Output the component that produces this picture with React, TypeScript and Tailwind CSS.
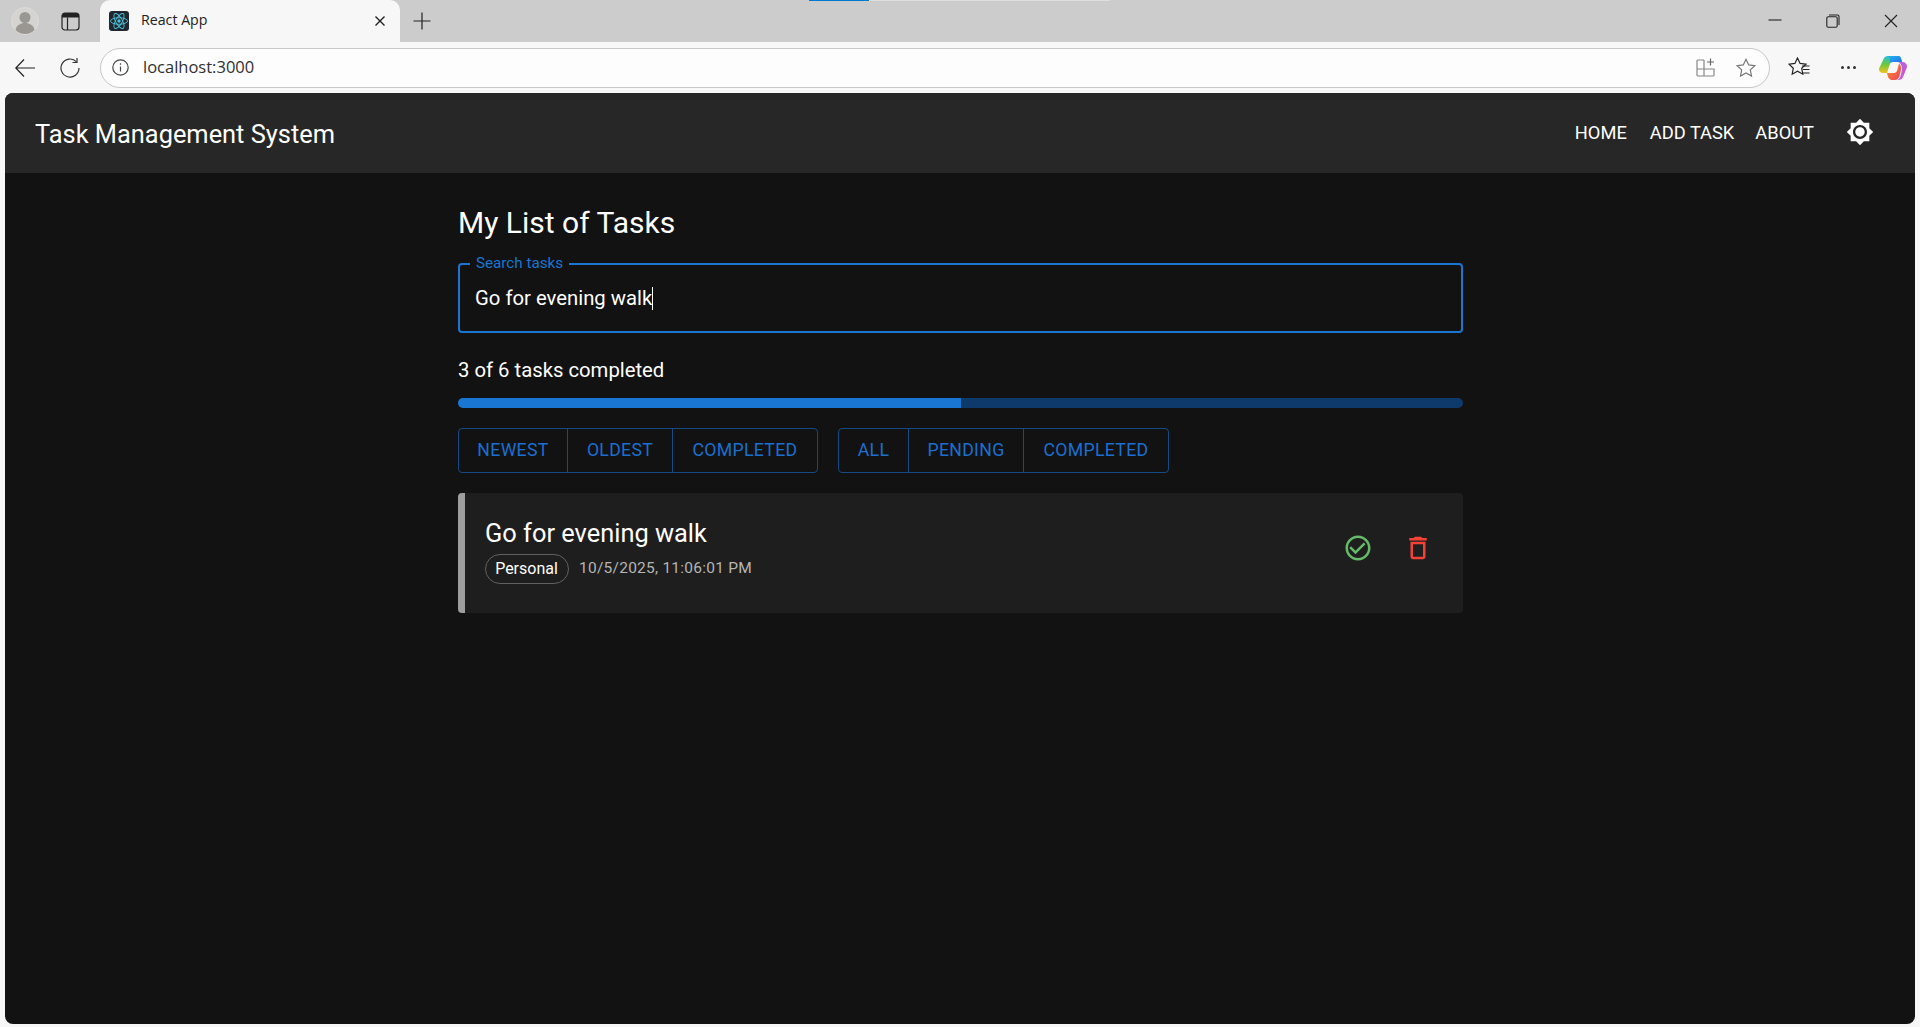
import React from "react";

const CHECK = "M16.59 7.58 10 14.17l-3.59-3.58L5 12l5 5 8-8zM12 2C6.48 2 2 6.48 2 12s4.48 10 10 10 10-4.48 10-10S17.52 2 12 2zm0 18c-4.42 0-8-3.58-8-8s3.58-8 8-8 8 3.58 8 8-3.58 8-8 8z";
const TRASH = "M6 19c0 1.1.9 2 2 2h8c1.1 0 2-.9 2-2V7H6v12zM8 9h8v10H8V9zm7.500-5l-1-1h-5l-1 1H5v2h14V4z";
const SUN = "M20 8.69V4h-4.69L12 .69 8.69 4H4v4.69L.69 12 4 15.31V20h4.69L12 23.31 15.31 20H20v-4.69L23.31 12 20 8.69zM12 18c-3.31 0-6-2.69-6-6s2.69-6 6-6 6 2.69 6 6-2.69 6-6 6zm0-10c-2.21 0-4 1.79-4 4s1.79 4 4 4 4-1.79 4-4-1.79-4-4-4z";

function Group({ items, widths }: { items: string[]; widths: string[] }) {
  return (
    <div className="flex h-[45px] rounded border border-[#144a85]">
      {items.map((t, i) => (
        <div
          key={t}
          className={`flex items-center justify-center text-[17.700px] font-normal tracking-[0.3px] text-[#1a6fd0] ${widths[i]} ${i > 0 ? "border-l border-[#144a85]" : ""}`}
        >
          {t}
        </div>
      ))}
    </div>
  );
}

function TabStrip() {
  return (
    <div className="relative flex h-[42px] shrink-0 items-center bg-[#cccccc]">
      <div className="absolute left-[809px] top-0 h-px w-[60px] bg-[#0078d4]" />
      <div className="absolute left-[869px] top-0 h-px w-[241px] bg-[#dedede]" />
      <div className="ml-[11px] flex h-7 w-7 items-center justify-center">
        <svg width="28" height="28" viewBox="0 0 28 28">
          <circle cx="14" cy="14" r="13.500" fill="#d6d4d1" stroke="#dcdad7" />
          <circle cx="14" cy="10.500" r="5.500" fill="#9a9793" />
          <path d="M4.500 23c1-5 5-7 9.500-7s8.500 2 9.500 7c-2.500 2.700-6 4-9.500 4s-7-1.300-9.500-4z" fill="#9a9793" />
        </svg>
      </div>
      <div className="ml-[21px] flex h-5 w-5 items-center justify-center">
        <svg width="19" height="19" viewBox="0 0 19 19" fill="none">
          <rect x="1" y="1" width="17" height="17" rx="3" stroke="#222" strokeWidth="1.200" />
          <path d="M1 5.500V4a3 3 0 0 1 3-3h11a3 3 0 0 1 3 3v1.500z" fill="#222" />
          <path d="M6.500 5.500V18" stroke="#222" strokeWidth="1.200" />
        </svg>
      </div>
      <div className="ml-5 flex h-[42px] w-[300px] items-center rounded-t-[10px] bg-[#f7f7f7] pl-[9px] pr-[14px]">
        <svg width="20" height="20" viewBox="0 0 20 20">
          <rect width="20" height="20" rx="3" fill="#20272e" />
          <g fill="none" stroke="#4fc3dc" strokeWidth="0.900">
            <ellipse cx="10" cy="10" rx="8.500" ry="3.300" />
            <ellipse cx="10" cy="10" rx="8.500" ry="3.300" transform="rotate(60 10 10)" />
            <ellipse cx="10" cy="10" rx="8.500" ry="3.300" transform="rotate(120 10 10)" />
          </g>
          <circle cx="10" cy="10" r="1.700" fill="#4fc3dc" />
        </svg>
        <span className="ml-3 flex-1 pb-[2px] font-['Open_Sans',sans-serif] text-[14.200px] text-[#222]">React App</span>
        <svg width="12" height="12" viewBox="0 0 12 12" stroke="#1f1f1f" strokeWidth="1.400">
          <path d="M1.500 1.500l9 9M10.500 1.500l-9 9" />
        </svg>
      </div>
      <div className="ml-[13px] flex h-[18px] w-[18px] items-center justify-center">
        <svg width="18" height="18" viewBox="0 0 18 18" stroke="#222" strokeWidth="1.200">
          <path d="M9 0.500v17M0.500 9h17" />
        </svg>
      </div>
      <div className="ml-auto flex items-center pr-[22px]">
        <svg width="14" height="14" viewBox="0 0 14 14" stroke="#222" strokeWidth="1.100" className="mr-[44px]">
          <path d="M0.500 6h13" />
        </svg>
        <svg width="14" height="14" viewBox="0 0 14 14" fill="none" stroke="#222" strokeWidth="1.100" className="mr-[44px]">
          <rect x="0.800" y="2.800" width="10.400" height="10.400" rx="1.500" />
          <path d="M3 1h8.500a1.500 1.500 0 0 1 1.500 1.500V11" />
        </svg>
        <svg width="14" height="14" viewBox="0 0 14 14" stroke="#222" strokeWidth="1.100">
          <path d="M1 1l12 12M13 1L1 13" />
        </svg>
      </div>
    </div>
  );
}

function Toolbar() {
  return (
    <div className="flex h-[51px] shrink-0 items-center bg-[#f7f7f7]">
      <div className="ml-[15px] flex h-5 w-5 items-center justify-center">
        <svg width="20" height="20" viewBox="0 0 20 20" fill="none" stroke="#222" strokeWidth="1.200">
          <path d="M20 10H0.800M9 1.500L0.800 10 9 18.500" />
        </svg>
      </div>
      <div className="ml-[25px] flex h-5 w-5 items-center justify-center">
        <svg width="20" height="20" viewBox="0 0 20 20" fill="none" stroke="#333" strokeWidth="1.200">
          <path d="M16.500 3.800A9 9 0 1 0 19 10" />
          <path d="M17 0v4.500h-4.500" />
        </svg>
      </div>
      <div className="ml-5 flex h-10 w-[1670px] items-center rounded-full border border-[#c8c8c8] bg-[#fdfdfd] pl-[11px] pr-[13px]">
        <svg width="17" height="17" viewBox="0 0 17 17" fill="none" stroke="#444" strokeWidth="1.200">
          <circle cx="8.500" cy="8.500" r="7.700" />
          <path d="M8.500 7.500v5M8.500 4.300v1.500" />
        </svg>
        <span className="ml-[14px] flex-1 font-['Open_Sans',sans-serif] text-[16.500px] text-[#303030]">localhost:3000</span>
        <svg width="19" height="19" viewBox="0 0 19 19" fill="none" stroke="#888" strokeWidth="1.200">
          <path d="M8 2H2a1 1 0 0 0-1 1v14a1 1 0 0 0 1 1h15a1 1 0 0 0 1-1v-6H1M8 2v16" />
          <path d="M14.500 0.500v7M11 4h7" stroke="#666" />
        </svg>
        <svg className="ml-[21px]" width="20" height="20" viewBox="0 0 20 20" fill="none" stroke="#777" strokeWidth="1.200">
          <path d="M10 1.300l2.700 5.600 6.100.8-4.500 4.200 1.200 6.100L10 15l-5.500 3 1.200-6.100-4.500-4.200 6.100-.8z" />
        </svg>
      </div>
      <svg className="ml-[18px]" width="22" height="21" viewBox="0 0 22 21" fill="none" stroke="#222" strokeWidth="1.200">
        <path d="M9.500 1l2.600 5.400 5.900.8-4.300 4.100 1.100 5.900-5.300-2.900-5.300 2.900 1.100-5.900L1 7.200l5.900-.8z" />
        <path d="M14 9h7.500M15 12.500h6.500M15 16h6.500" />
      </svg>
      <div className="ml-[31px] flex items-center gap-[3px]">
        <span className="h-[3px] w-[3px] rounded-full bg-[#333]" />
        <span className="h-[3px] w-[3px] rounded-full bg-[#333]" />
        <span className="h-[3px] w-[3px] rounded-full bg-[#333]" />
      </div>
      <svg className="ml-[23px]" width="28" height="26" viewBox="0 0 28 26">
        <defs>
          <linearGradient id="cpa" x1="0" y1="0" x2="1" y2="1">
            <stop offset="0" stopColor="#1fb6f2" />
            <stop offset="1" stopColor="#2a6be8" />
          </linearGradient>
          <linearGradient id="cpb" x1="0" y1="0" x2="0" y2="1">
            <stop offset="0" stopColor="#22c0d8" />
            <stop offset="0.500" stopColor="#6cc83c" />
            <stop offset="1" stopColor="#f6c31c" />
          </linearGradient>
          <linearGradient id="cpc" x1="0" y1="0" x2="1" y2="1">
            <stop offset="0" stopColor="#a868f0" />
            <stop offset="1" stopColor="#d850c0" />
          </linearGradient>
          <linearGradient id="cpd" x1="0" y1="0" x2="1" y2="1">
            <stop offset="0" stopColor="#f59a2c" />
            <stop offset="1" stopColor="#ee4058" />
          </linearGradient>
        </defs>
        <path d="M9 1h10c1.500 0 2.500.8 3 2.200l1 3.800H14c-2 0-3 1-3.500 3L8 18H4C1.800 18 0 16.500 0 14.500c0-.6.100-1 .3-1.600L4.500 4C5.300 2 7 1 9 1z" fill="url(#cpb)" />
        <path d="M9 1h10c1.500 0 2.500.8 3 2.200l1 3.800h-9c-1 0-2 .2-2.700 1C11 4.500 10.500 2 9 1z" fill="url(#cpa)" />
        <path d="M19 7h4c3 0 5 2 5 4.500 0 .5-.100 1-.3 1.500L24 22c-.8 2-2.500 3-4.500 3h-1c2-1 2.800-3 3.300-5l1.200-5c.5-3-1-7-3.900-8z" fill="url(#cpc)" />
        <path d="M8 18h7c1.500 0 2.800-1 3.300-3L20 8.500c1.500 1 2.500 3.500 2 6.500l-1.200 5c-.5 2-1.800 5-4.800 5h-3c-2.500 0-4-2-5-7z" fill="url(#cpd)" />
      </svg>
    </div>
  );
}

export default function App() {
  return (
    <div className="flex h-[1027px] w-full flex-col overflow-hidden bg-[#f7f7f7] font-['Roboto',sans-serif]">
      <TabStrip />
      <Toolbar />
      <div className="mx-[5px] flex h-[931px] flex-col overflow-hidden rounded-lg bg-[#121212] text-white">
        <header className="flex h-[80px] shrink-0 items-center bg-[#272727] pl-[30px] pr-[41px]">
          <div className="flex-1 pt-[2px] text-[25.400px] leading-8">Task Management System</div>
          <nav className="flex items-center pb-[2px] text-[18.300px] font-normal leading-6">
            <span className="mr-[23px] pt-px">HOME</span>
            <span className="mr-[21px] pt-px">ADD TASK</span>
            <span className="mr-8 pt-px">ABOUT</span>
            <svg width="28" height="28" viewBox="0 0 24 24" fill="#fff">
              <path d={SUN} />
            </svg>
          </nav>
        </header>
        <main className="ml-[453px] flex w-[1005px] flex-col pt-[30px]">
          <h1 className="pt-px text-[30px] font-normal leading-[38px]">My List of Tasks</h1>
          <fieldset className="mt-[15px] h-[76px] rounded border-2 border-[#1976d2] px-[7px]">
            <legend className="ml-[3px] px-[6px] text-[15.200px] leading-[13px] text-[#1976d2]">Search tasks</legend>
            <div className="flex h-[56px] items-center pl-[8px] text-[20.300px]">
              <span>Go for evening walk</span>
              <span className="h-[23px] w-px bg-white" />
            </div>
          </fieldset>
          <div className="mt-[25px] text-[20.300px] font-normal leading-6">3 of 6 tasks completed</div>
          <div className="mt-[16px] h-[10px] overflow-hidden rounded-[5px] bg-[#0e3a6b]">
            <div className="h-full w-1/2 bg-[#1976d2]" />
          </div>
          <div className="mt-5 flex gap-5">
            <Group items={["NEWEST", "OLDEST", "COMPLETED"]} widths={["w-[108px]", "w-[105px]", "w-[145px]"]} />
            <Group items={["ALL", "PENDING", "COMPLETED"]} widths={["w-[69px]", "w-[115px]", "w-[145px]"]} />
          </div>
          <article className="mt-5 flex h-[120px] items-center rounded border-l-[7px] border-[#9e9e9e] bg-[#1e1e1e] pl-5 pr-[30px]">
            <div className="flex-1 pb-[6px]">
              <div className="text-[25.400px] leading-8">Go for evening walk</div>
              <div className="mt-[5px] flex items-center">
                <span className="flex h-[30px] w-[84px] items-center justify-center rounded-full border border-[#616161] pr-px text-[16px]">Personal</span>
                <span className="ml-[10px] text-[15.500px] tracking-[0.25px] text-[#b5b5b5]">10/5/2025, 11:06:01 PM</span>
              </div>
            </div>
            <div className="flex items-center gap-[30px] pb-[10px]">
              <svg width="30" height="30" viewBox="0 0 24 24" fill="#66bb6a">
                <path d={CHECK} />
              </svg>
              <svg width="30" height="30" viewBox="0 0 24 24" fill="#f44336">
                <path d={TRASH} />
              </svg>
            </div>
          </article>
        </main>
      </div>
    </div>
  );
}
